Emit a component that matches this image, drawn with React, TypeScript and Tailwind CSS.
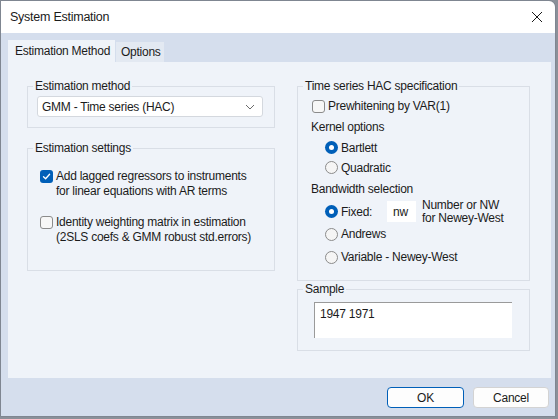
import React from 'react';

const font = "font-['Liberation_Sans',Arial,sans-serif]";

const Check: React.FC<{ checked?: boolean }> = ({ checked }) =>
  checked ? (
    <span className="block w-[13px] h-[13px] rounded-[3px] bg-[#005fb8] flex items-center justify-center shrink-0">
      <svg width="9" height="9" viewBox="0 0 9 9" fill="none">
        <path d="M1.5 4.8 L3.6 6.8 L7.6 2.2" stroke="white" strokeWidth="1.3" strokeLinecap="round" strokeLinejoin="round" />
      </svg>
    </span>
  ) : (
    <span className="block w-[13px] h-[13px] rounded-[3px] border border-[#8b8b8b] bg-[#f7f7f7] shrink-0" />
  );

const Radio: React.FC<{ checked?: boolean }> = ({ checked }) =>
  checked ? (
    <span className="w-[13px] h-[13px] rounded-full bg-[#005fb8] flex items-center justify-center shrink-0">
      <span className="block w-[5px] h-[5px] rounded-full bg-white" />
    </span>
  ) : (
    <span className="block w-[13px] h-[13px] rounded-full border border-[#8b8b8b] bg-[#f5f5f5] shrink-0" />
  );

const Group: React.FC<{ title: string; className: string; children: React.ReactNode }> = ({ title, className, children }) => (
  <fieldset className={`border border-[#d9dee6] ${className}`}>
    <legend className="ml-[5px] px-[2px] leading-[14px]">{title}</legend>
    {children}
  </fieldset>
);

export default function App() {
  return (
    <div className={`w-[558px] h-[419px] bg-[#8b9099] ${font} text-[12px] tracking-[-0.25px] text-[#1b1b1b] overflow-hidden`}>
      <div className="w-[556px] h-[417px] border border-[#7f8691] rounded-tr-[7px] overflow-hidden flex flex-col">
        {/* Title bar */}
        <div className="h-[32px] bg-white flex items-center justify-between pl-[9px] pr-[10px] shrink-0">
          <span className="text-[12.5px]">System Estimation</span>
          <svg width="12" height="12" viewBox="0 0 12 12" className="mr-[2px]">
            <path d="M1 1 L11 11 M11 1 L1 11" stroke="#1b1b1b" strokeWidth="1" />
          </svg>
        </div>

        {/* Body */}
        <div className="flex-1 bg-[#d5deed] pl-[7px] pt-[7px] flex flex-col">
          <div className="flex items-end h-[22px]">
            <div className="w-[107px] h-[22px] bg-[#eff3f9] flex items-center pl-[7px]">Estimation Method</div>
            <div className="w-[48px] h-[20px] bg-[#e3e9f2] flex items-center pl-[5px] ml-[1px]">Options</div>
          </div>

          <div className="w-[543px] h-[316px] bg-[#eff3f9] flex pl-[19px] pt-[17px] gap-[22px]">
            {/* Left column */}
            <div className="w-[248px] flex flex-col">
              <Group title="Estimation method" className="h-[49px]">
                <div className="pl-[9px] pr-[11px] pt-[3px]">
                  <div className="h-[21px] bg-white border border-[#d4d8de] rounded-[3px] flex items-center justify-between pl-[4px] pr-[7px]">
                    <span>GMM - Time series (HAC)</span>
                    <svg width="10" height="6" viewBox="0 0 10 6">
                      <path d="M1 1 L5 5 L9 1" stroke="#6b6b6b" strokeWidth="1" fill="none" />
                    </svg>
                  </div>
                </div>
              </Group>

              <Group title="Estimation settings" className="h-[130px] mt-[13px]">
                <div className="pl-[12px] pt-[14px] flex flex-col leading-[15px]">
                  <div className="flex items-start gap-[3px]">
                    <span className="mt-[1px]"><Check checked /></span>
                    <span>Add lagged regressors to instruments<br />for linear equations with AR terms</span>
                  </div>
                  <div className="flex items-start gap-[3px] mt-[16px]">
                    <span className="mt-[1px]"><Check /></span>
                    <span>Identity weighting matrix in estimation<br />(2SLS coefs &amp; GMM robust std.errors)</span>
                  </div>
                </div>
              </Group>
            </div>

            {/* Right column */}
            <div className="w-[233px] flex flex-col">
              <Group title="Time series HAC specification" className="h-[202px]">
                <div className="pt-[3px] flex flex-col">
                  <div className="h-[20px] flex items-center gap-[3px] pl-[14px]"><Check /><span>Prewhitening by VAR(1)</span></div>
                  <div className="h-[22px] flex items-center pl-[13px]">Kernel options</div>
                  <div className="h-[19px] flex items-center gap-[3px] pl-[27px]"><Radio checked /><span>Bartlett</span></div>
                  <div className="h-[21px] flex items-center gap-[3px] pl-[27px]"><Radio /><span>Quadratic</span></div>
                  <div className="h-[22px] flex items-center pl-[13px]">Bandwidth selection</div>
                  <div className="h-[23px] flex items-center pl-[27px]">
                    <Radio checked />
                    <span className="ml-[3px] w-[46px]">Fixed:</span>
                    <div className="w-[29px] h-[21px] bg-white flex items-center pl-[6px]">nw</div>
                    <div className="ml-[6px] leading-[13px]">Number or NW<br />for Newey-West</div>
                  </div>
                  <div className="h-[22px] flex items-center gap-[3px] pl-[27px]"><Radio /><span>Andrews</span></div>
                  <div className="h-[24px] flex items-center gap-[3px] pl-[27px]"><Radio /><span>Variable - Newey-West</span></div>
                </div>
              </Group>

              <Group title="Sample" className="h-[69px] mt-[1px]">
                <div className="pl-[16px] pt-[6px]">
                  <div className="w-[198px] h-[36px] bg-white border-t border-l border-[#9a9a9a] pl-[5px] pt-[2px]">1947 1971</div>
                </div>
              </Group>
            </div>
          </div>

          {/* Buttons */}
          <div className="flex justify-end gap-[9px] pr-[6px] mt-[9px]">
            <button className="w-[77px] h-[21px] bg-[#fdfdfd] border border-[#005fb8] rounded-[4px]">OK</button>
            <button className="w-[76px] h-[21px] bg-[#fdfdfd] border border-[#d3d3d3] rounded-[4px]">Cancel</button>
          </div>
        </div>
      </div>
    </div>
  );
}
